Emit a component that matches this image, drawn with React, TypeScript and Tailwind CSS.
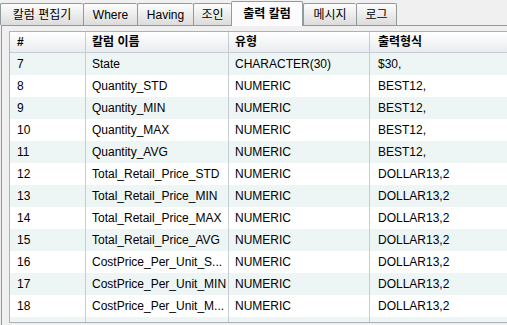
import React from "react";

const tabs = [
  { label: "칼럼 편집기", w: 83 },
  { label: "Where", w: 54 },
  { label: "Having", w: 56 },
  { label: "조인", w: 38 },
  { label: "출력 칼럼", w: 72, active: true },
  { label: "메시지", w: 53 },
  { label: "로그", w: 41 },
];

const rows: [string, string, string, string][] = [
  ["7", "State", "CHARACTER(30)", "$30,"],
  ["8", "Quantity_STD", "NUMERIC", "BEST12,"],
  ["9", "Quantity_MIN", "NUMERIC", "BEST12,"],
  ["10", "Quantity_MAX", "NUMERIC", "BEST12,"],
  ["11", "Quantity_AVG", "NUMERIC", "BEST12,"],
  ["12", "Total_Retail_Price_STD", "NUMERIC", "DOLLAR13,2"],
  ["13", "Total_Retail_Price_MIN", "NUMERIC", "DOLLAR13,2"],
  ["14", "Total_Retail_Price_MAX", "NUMERIC", "DOLLAR13,2"],
  ["15", "Total_Retail_Price_AVG", "NUMERIC", "DOLLAR13,2"],
  ["16", "CostPrice_Per_Unit_S...", "NUMERIC", "DOLLAR13,2"],
  ["17", "CostPrice_Per_Unit_MIN", "NUMERIC", "DOLLAR13,2"],
  ["18", "CostPrice_Per_Unit_M...", "NUMERIC", "DOLLAR13,2"],
  ["", "", "", ""],
];

export default function App() {
  return (
    <div
      className="w-[507px] h-[325px] overflow-hidden bg-[#f0f0f0] text-[12px] text-black"
      style={{ fontFamily: '"Liberation Sans", Arial, "Noto Sans CJK KR", sans-serif' }}
    >
      {/* tabs */}
      <div className="flex items-end h-[25px]">
        {tabs.map((t) =>
          t.active ? (
            <div
              key={t.label}
              style={{ width: t.w }}
              className="relative z-10 h-[25px] -mb-[1px] flex items-center justify-center border border-b-0 border-[#919b9c] rounded-t-[2px] bg-[#fcfcfe] font-bold"
            >
              {t.label}
            </div>
          ) : (
            <div
              key={t.label}
              style={{ width: t.w }}
              className="h-[22px] flex items-center justify-center border border-b-0 border-r-0 border-[#919b9c] rounded-t-[2px] bg-gradient-to-b from-[#fdfdfd] to-[#dcdcdc] last:border-r"
            >
              {t.label}
            </div>
          )
        )}
      </div>
      {/* panel */}
      <div className="h-[300px] border-t border-l border-[#919b9c] ml-[1px] pl-[7px] pt-[5px]">
        <div className="h-[292px] border border-r-0 border-[#a9b2bb] bg-white overflow-hidden">
          <div className="grid grid-cols-[76px_143px_141px_1fr] h-[21px] bg-gradient-to-b from-[#ffffff] to-[#e9ecef] border-b border-[#c5ccd3] font-bold">
            <div className="border-r border-[#c5ccd3] pl-[7px] flex items-center">#</div>
            <div className="border-r border-[#c5ccd3] pl-[6px] flex items-center">칼럼 이름</div>
            <div className="border-r border-[#c5ccd3] pl-[6px] flex items-center">유형</div>
            <div className="pl-[8px] flex items-center">출력형식</div>
          </div>
          {rows.map((r, i) => (
            <div
              key={i}
              className={`grid grid-cols-[76px_143px_141px_1fr] h-[22px] ${
                i % 2 === 0 ? "bg-[#eef5f5]" : "bg-white"
              }`}
            >
              <div className="border-r border-[#c5ccd3] pl-[7px] flex items-center">{r[0]}</div>
              <div className="border-r border-[#c5ccd3] pl-[6px] flex items-center whitespace-nowrap overflow-hidden">{r[1]}</div>
              <div className="border-r border-[#c5ccd3] pl-[6px] flex items-center">{r[2]}</div>
              <div className="pl-[8px] flex items-center">{r[3]}</div>
            </div>
          ))}
        </div>
      </div>
    </div>
  );
}
